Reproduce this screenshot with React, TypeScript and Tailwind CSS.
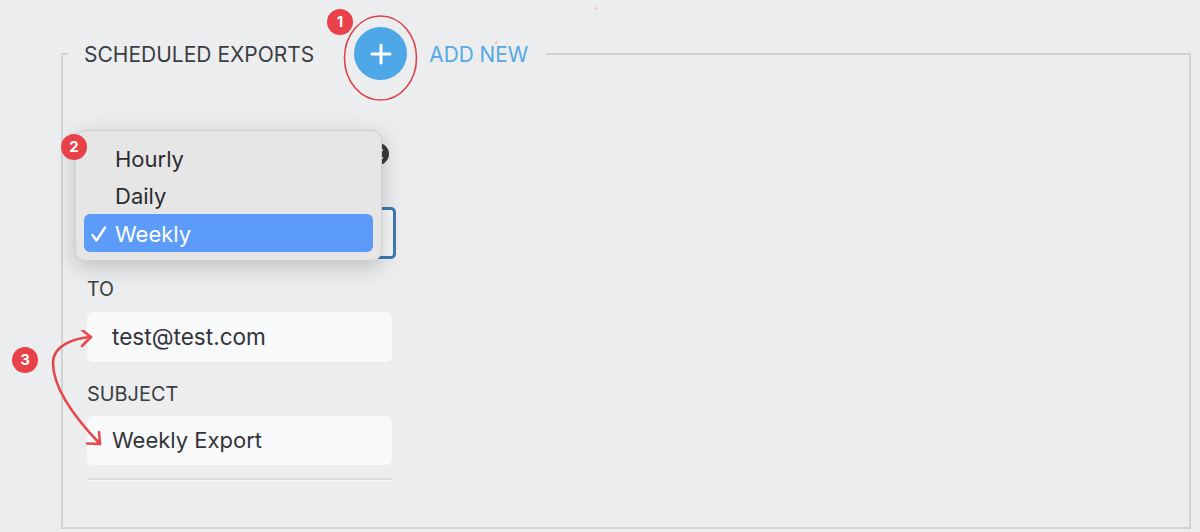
export default function App() {
  return (
    <div className="relative w-[1200px] h-[532px] overflow-hidden bg-[#ecedef] pt-[27px] pl-[61px] pr-[9px] font-['Inter',sans-serif] text-[#333538]">
      <fieldset className="h-[502px] border-2 border-[#d2d3d6] pl-[24px] pr-[20px] m-0">
        <legend className="-ml-[19px] pl-[16px] pr-[18px] flex items-center h-[53px]">
          <span className="text-[21px] text-[#3b3d40] leading-none pt-[2px]">SCHEDULED EXPORTS</span>
          <span className="ml-[40px] w-[53px] h-[53px] rounded-full bg-[#4ea7e6] flex items-center justify-center">
            <svg width="22" height="22" viewBox="0 0 22 22" fill="none" stroke="#fff" strokeWidth="3" strokeLinecap="round">
              <path d="M11 2v18M2 11h18" />
            </svg>
          </span>
          <span className="ml-[22px] text-[20.8px] text-[#55a8e3] leading-none pt-[4px]">ADD NEW</span>
        </legend>
        <div className="w-[305px]">
          <div className="flex justify-end h-[22px] mt-[63px] -mr-[-3px]">
            <svg width="22" height="22" viewBox="0 0 22 22">
              <circle cx="11" cy="11" r="11" fill="#3a3b3d" />
              <path d="M7 7l8 8M15 7l-8 8" stroke="#ebecee" strokeWidth="2.4" strokeLinecap="round" />
            </svg>
          </div>
          <div className="mt-[42px] h-[52px] w-[309px] rounded-[5px] border-[3px] border-[#3f78b5] bg-[#f7f8fa]" />
          <div className="mt-[19px] h-[22px] text-[19.5px] leading-[22px] text-[#3b3d40]">TO</div>
          <div className="mt-[12px] h-[50px] rounded-[6px] bg-[#f8f9fb] flex items-center pl-[25px] text-[22.6px] text-[#333538]">test@test.com</div>
          <div className="mt-[21px] h-[22px] text-[19.9px] leading-[22px] text-[#3b3d40]">SUBJECT</div>
          <div className="mt-[11px] h-[49px] rounded-[6px] bg-[#f8f9fb] flex items-center pl-[25px] text-[22px] text-[#333538]">Weekly Export</div>
          <div className="mt-[13px] h-[3px] border-t-2 border-[#dcdde0] bg-[#f4f5f7]" />
        </div>
      </fieldset>

      <div className="absolute left-[75px] top-[130px] w-[307px] h-[131px] rounded-[10px] bg-[#e6e6e7] border border-[#cfcfd1] shadow-[0_6px_22px_rgba(0,0,0,0.2)] px-[8px] pt-[9px] text-[22px] text-[#2c2d2f]">
        <div className="h-[38px] leading-[38px] pl-[31px]">Hourly</div>
        <div className="h-[36px] leading-[36px] pl-[31px]">Daily</div>
        <div className="relative h-[38px] leading-[40px] pl-[31px] rounded-[6px] bg-[#5c9bf7] text-white">
          <svg className="absolute left-[7px] top-[12px]" width="16" height="16" viewBox="0 0 16 16" fill="none" stroke="#fff" strokeWidth="2.4" strokeLinecap="round" strokeLinejoin="round">
            <path d="M1.5 9l4 5.500L14 1.500" />
          </svg>
          Weekly
        </div>
      </div>

      <svg className="absolute left-[340px] top-[10px]" width="84" height="96" viewBox="0 0 84 96" fill="none">
        <ellipse cx="40.500" cy="48" rx="36" ry="42" stroke="#d9444c" strokeWidth="1.6" />
      </svg>
      <svg className="absolute left-[45px] top-[330px]" width="60" height="120" viewBox="0 0 60 120" fill="none" stroke="#e5484d" strokeWidth="2.6" strokeLinecap="round" strokeLinejoin="round">
        <path d="M46 7C30 8 8 15 8 33C8 60 32 90 55 114" />
        <path d="M37 0L46 7L37 16" />
        <path d="M42 113.500L55 114L54 102" />
      </svg>
      <Badge className="left-[327px] top-[9px]" n="1" />
      <Badge className="left-[61px] top-[134px]" n="2" />
      <Badge className="left-[12px] top-[347px]" n="3" />
      <div className="absolute left-[594px] top-[7px] w-[3px] h-[3px] rounded-full bg-[#f0c4cc]" />
      <div className="absolute left-[495px] top-[41px] w-[3px] h-[3px] rounded-full bg-[#f0c4cc]" />
    </div>
  );
}

function Badge({ className, n }: { className: string; n: string }) {
  return (
    <div className={`absolute ${className} w-[26px] h-[26px] rounded-full bg-[#e8414a] text-white text-[15px] font-bold flex items-center justify-center`}>
      {n}
    </div>
  );
}
